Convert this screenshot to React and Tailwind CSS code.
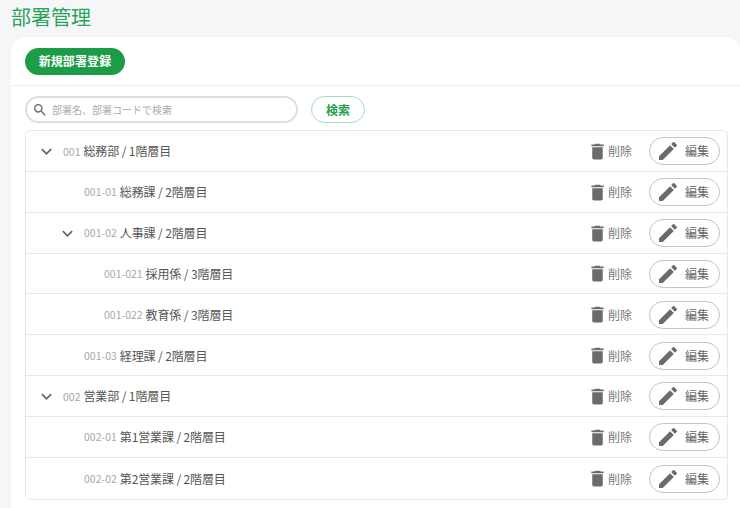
import { useState } from "react";

const FONT = "[font-family:'Noto_Sans_CJK_JP','Noto_Sans',sans-serif]";

// 部署一覧 (level で字下げ)
const DEPARTMENTS = [
  { code: "001", name: "総務部 / 1階層目", level: 0, open: true },
  { code: "001-01", name: "総務課 / 2階層目", level: 1 },
  { code: "001-02", name: "人事課 / 2階層目", level: 1, open: true },
  { code: "001-021", name: "採用係 / 3階層目", level: 2 },
  { code: "001-022", name: "教育係 / 3階層目", level: 2 },
  { code: "001-03", name: "経理課 / 2階層目", level: 1 },
  { code: "002", name: "営業部 / 1階層目", level: 0, open: true },
  { code: "002-01", name: "第1営業課 / 2階層目", level: 1 },
  { code: "002-02", name: "第2営業課 / 2階層目", level: 1 },
];

const PADDING = ["pl-[10px]", "pl-[31px]", "pl-[51px]"];

const IconChevron = () => (
  <svg width="21" height="21" viewBox="0 0 24 24" className="fill-[#666]">
    <path d="M7.41 8.59 12 13.17l4.59-4.58L18 10l-6 6-6-6z" />
  </svg>
);

const IconTrash = () => (
  <svg width="21" height="21" viewBox="0 0 24 24" className="fill-[#6b6b6b]">
    <path d="M6 19c0 1.100.9 2 2 2h8c1.100 0 2-.9 2-2V7H6v12zM19 4h-3.500l-1-1h-5l-1 1H5v2h14V4z" />
  </svg>
);

const IconEdit = () => (
  <svg width="24" height="24" viewBox="0 0 24 24" className="fill-[#6b6b6b]">
    <path d="M3 17.250V21h3.750L17.810 9.940l-3.750-3.750L3 17.250zM20.710 7.040a.996.996 0 0 0 0-1.410l-2.340-2.340a.996.996 0 0 0-1.410 0l-1.830 1.830 3.750 3.750 1.830-1.830z" />
  </svg>
);

const IconSearch = () => (
  <svg width="16" height="16" viewBox="0 0 24 24" className="fill-[#666] shrink-0">
    <path d="M15.500 14h-.79l-.28-.27A6.471 6.471 0 0 0 16 9.500 6.500 6.500 0 1 0 9.500 16c1.610 0 3.090-.59 4.230-1.570l.27.28v.79l5 4.990L20.490 19l-4.990-5zm-6 0C7.010 14 5 11.990 5 9.500S7.010 5 9.500 5 14 7.010 14 9.500 11.990 14 9.500 14z" />
  </svg>
);

const DepartmentRow = ({ dept }) => (
  <div className="h-[40.85px] pt-[1px] flex items-center border-b border-[#e6e8ea] last:border-b-0 pr-[7px]">
    <div className={`flex items-center flex-1 min-w-0 ${PADDING[dept.level]}`}>
      {/* 開閉アイコンの枠 (子なしは空) */}
      <span className="w-[21px] h-[21px] mr-[6px] shrink-0">{dept.open && <IconChevron />}</span>
      <span className="text-[10.5px] text-[#a8a8a8] mr-[3px]">{dept.code}</span>
      <span className="text-[12px] tracking-[-0.01em] text-[#555]">{dept.name}</span>
    </div>
    <button className="flex items-center text-[12px] text-[#777] mr-[17px]">
      <IconTrash />
      <span>削除</span>
    </button>
    <button className="w-[71px] h-[28px] flex items-center pl-[6px] gap-[5px] rounded-full border border-[#c4c4c4] bg-white text-[12px] text-[#666]">
      <IconEdit />
      <span>編集</span>
    </button>
  </div>
);

const App = () => {
  const [keyword, setKeyword] = useState("");

  return (
    <div className={`w-[740px] h-[508px] overflow-hidden bg-[#f5f6f8] pl-[11px] ${FONT}`}>
      <h1 className="h-[36px] text-[20px] leading-[34px] text-[#2aa35a]">部署管理</h1>

      <div className="bg-white rounded-tl-[14px] rounded-tr-[14px] border-t border-[#f0f1f2] h-[472px]">
        {/* ヘッダー */}
        <div className="h-[49px] px-[14px] pt-[10px] border-b border-[#eeeeee]">
          <button className="w-[100px] h-[27px] rounded-full bg-[#1c9c46] text-white text-[12px] tracking-[0.01em] font-bold">
            新規部署登録
          </button>
        </div>

        <div className="pl-[14px] pr-[12px] pt-[10px]">
          {/* 検索 */}
          <div className="flex items-center gap-[13px] mb-[7px]">
            <div className="w-[273px] h-[27px] flex items-center pl-[5px] gap-[4px] rounded-full border-2 border-[#dedede] bg-white">
              <IconSearch />
              <input
                value={keyword}
                onChange={(e) => setKeyword(e.target.value)}
                placeholder="部署名、部署コードで検索"
                className="flex-1 min-w-0 text-[10px] outline-none placeholder:text-[#aaa]"
              />
            </div>
            <button className="w-[54px] h-[27px] rounded-full border border-[#a6dcb8] bg-white text-[12px] font-bold text-[#27a050]">
              検索
            </button>
          </div>

          {/* 部署一覧 */}
          <div className="border border-[#e6e8ea] rounded-[5px] bg-white">
            {DEPARTMENTS.map((dept) => (
              <DepartmentRow key={dept.code} dept={dept} />
            ))}
          </div>
        </div>
      </div>
    </div>
  );
};

export default App;
